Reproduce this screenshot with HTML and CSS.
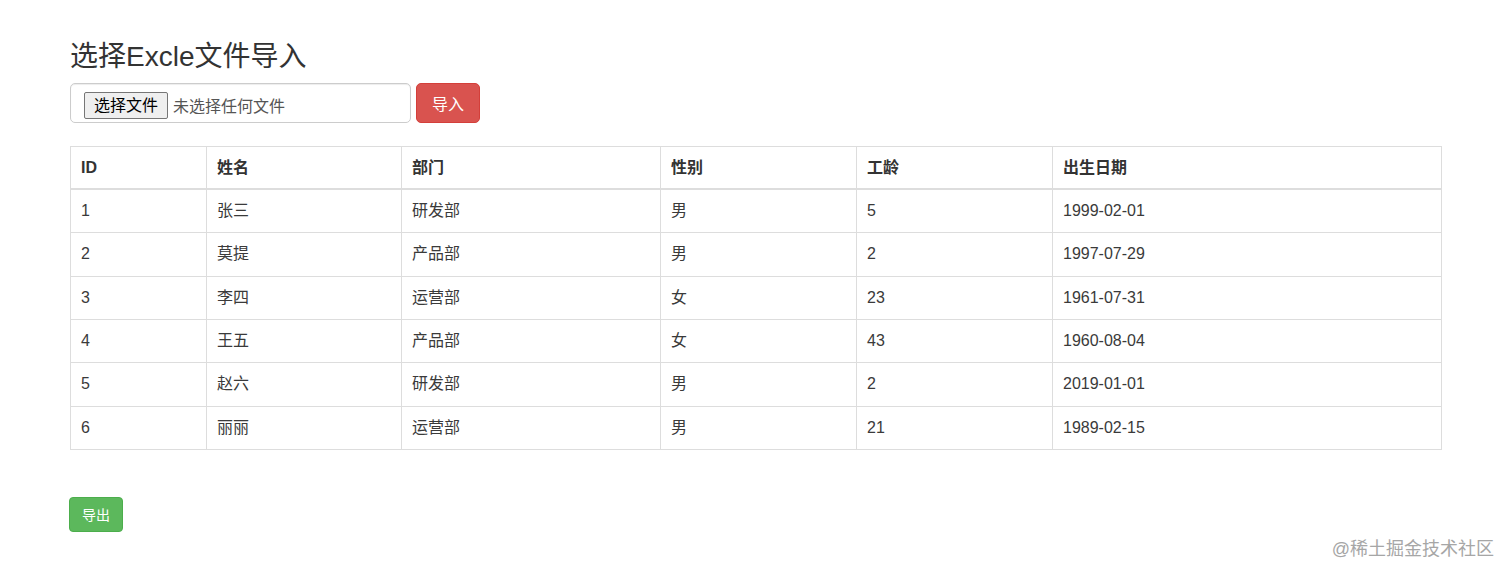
FILE: index.html
```html
<!DOCTYPE html>
<html lang="zh-CN">
<head>
<meta charset="utf-8">
<title>选择Excle文件导入</title>
<link rel="stylesheet" href="styles.css">
</head>
<body>
<div class="container">
  <h3 class="title">选择Excle文件导入</h3>
  <div class="upload-row">
    <div class="file-control">
      <span class="file-btn">选择文件</span>
      <span class="file-name">未选择任何文件</span>
    </div>
    <button class="btn btn-danger">导入</button>
  </div>
  <table class="data-table">
    <colgroup>
      <col class="c1"><col class="c2"><col class="c3"><col class="c4"><col class="c5"><col class="c6">
    </colgroup>
    <thead>
      <tr><th>ID</th><th>姓名</th><th>部门</th><th>性别</th><th>工龄</th><th>出生日期</th></tr>
    </thead>
    <tbody>
      <tr><td>1</td><td>张三</td><td>研发部</td><td>男</td><td>5</td><td>1999-02-01</td></tr>
      <tr><td>2</td><td>莫提</td><td>产品部</td><td>男</td><td>2</td><td>1997-07-29</td></tr>
      <tr><td>3</td><td>李四</td><td>运营部</td><td>女</td><td>23</td><td>1961-07-31</td></tr>
      <tr><td>4</td><td>王五</td><td>产品部</td><td>女</td><td>43</td><td>1960-08-04</td></tr>
      <tr><td>5</td><td>赵六</td><td>研发部</td><td>男</td><td>2</td><td>2019-01-01</td></tr>
      <tr><td>6</td><td>丽丽</td><td>运营部</td><td>男</td><td>21</td><td>1989-02-15</td></tr>
    </tbody>
  </table>
  <button class="btn btn-success">导出</button>
</div>
<div class="watermark">@稀土掘金技术社区</div>
</body>
</html>
```
FILE: styles.css
```css
html, body {
  margin: 0;
  padding: 0;
  background: #fff;
}
body {
  font-family: "Liberation Sans", "Noto Sans CJK SC", sans-serif;
  font-size: 16px;
  color: #333;
  height: 577px;
  position: relative;
  overflow: hidden;
}
.container {
  padding: 41px 70px 0 70px;
}
.title {
  margin: 0 0 10px 0;
  font-size: 28px;
  font-weight: 400;
  line-height: 32px;
  color: #333;
}
.upload-row {
  display: flex;
  gap: 5px;
  align-items: center;
}
.file-control {
  box-sizing: border-box;
  width: 341px;
  height: 40px;
  border: 1px solid #ccc;
  border-radius: 5px;
  box-shadow: inset 0 1px 1px rgba(0,0,0,0.075);
  display: flex;
  align-items: center;
  padding-left: 13px;
  padding-top: 4px;
}
.file-btn {
  box-sizing: border-box;
  height: 27px;
  padding: 0 9px;
  border: 1px solid #767676;
  border-radius: 2px;
  background: #efefef;
  color: #000;
  font-size: 16px;
  line-height: 25px;
  margin-right: 5px;
}
.file-name {
  color: #555;
  font-size: 16px;
}
.btn {
  font-family: "Liberation Sans", "Noto Sans CJK SC", sans-serif;
  border: 1px solid transparent;
  color: #fff;
  cursor: pointer;
}
.btn-danger {
  width: 64px;
  height: 40px;
  font-size: 16px;
  background: #d9534f;
  border-color: #d43f3a;
  border-radius: 5px;
}
.data-table {
  margin-top: 23px;
  width: 1372px;
  border-collapse: collapse;
  border: 1px solid #ddd;
}
.c1 { width: 136px; }
.c2 { width: 195px; }
.c3 { width: 259px; }
.c4 { width: 196px; }
.c5 { width: 196px; }
.c6 { width: auto; }
.data-table th,
.data-table td {
  border: 1px solid #ddd;
  padding: 9px 9px 9px 10px;
  line-height: 24.33px;
  text-align: left;
  font-size: 16px;
}
.data-table td {
  color: #3a3a3a;
}
.data-table th {
  font-weight: bold;
  border-bottom: 2px solid #ddd;
  line-height: 23px;
  color: #333;
}
.btn-success {
  display: block;
  margin-top: 47px;
  margin-left: -1px;
  width: 54px;
  height: 35px;
  font-size: 14px;
  background: #5cb85c;
  border-color: #4cae4c;
  border-radius: 4px;
  padding: 0;
}
.watermark {
  position: absolute;
  right: 18px;
  top: 537px;
  font-size: 18px;
  line-height: 24px;
  color: #a6a6a6;
}
```
